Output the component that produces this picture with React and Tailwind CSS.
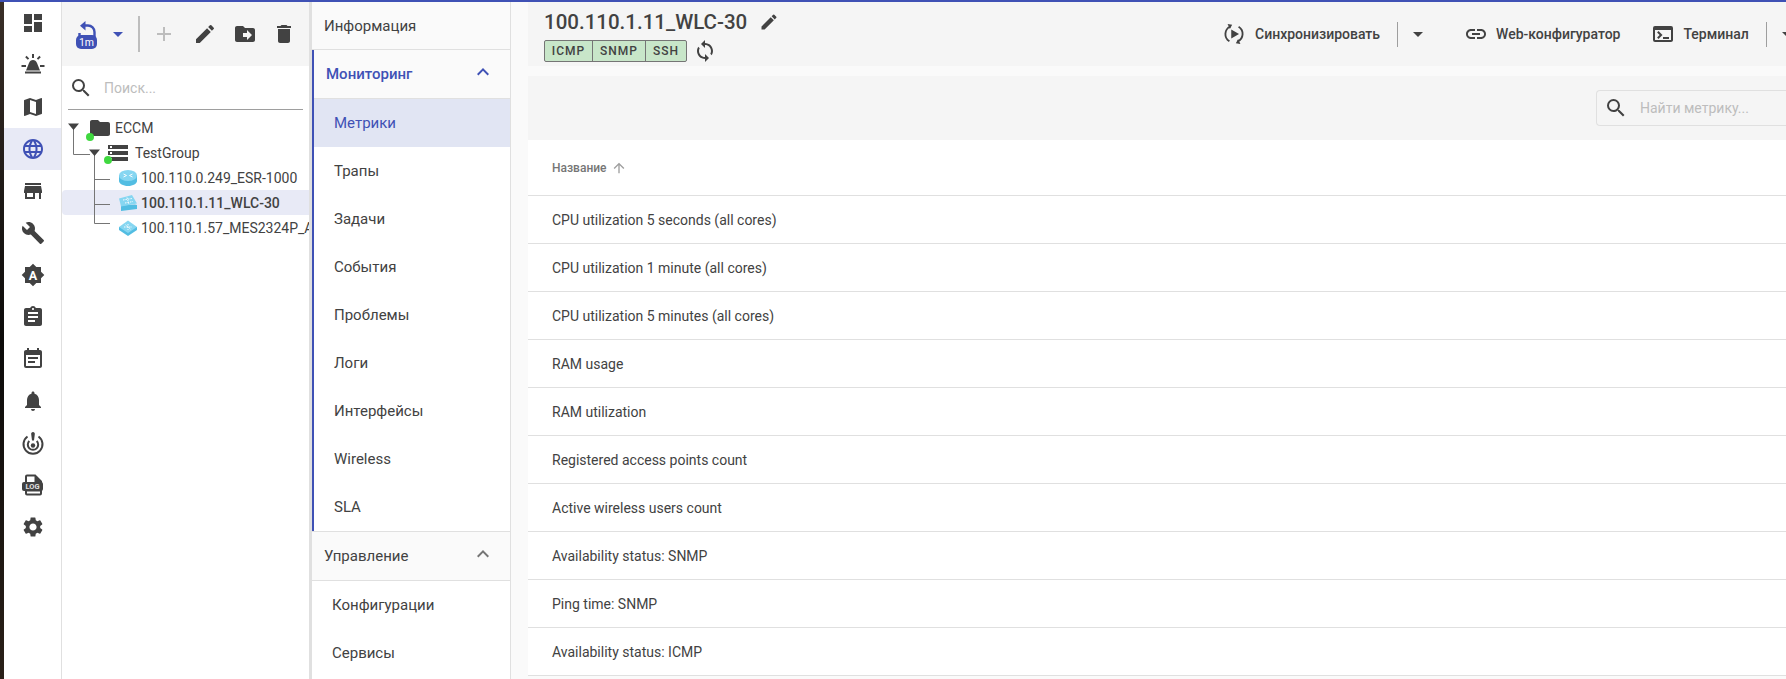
import React from 'react';
import {
  MdDashboard, MdMap, MdLanguage, MdStore, MdBuild, MdAssignment, MdEventNote, MdNotifications,
  MdSettings, MdAdd, MdEdit, MdDriveFileMove, MdDelete, MdSearch, MdSync, MdLink, MdTerminal,
  MdArrowDropDown, MdArrowUpward, MdExpandLess, MdFolder, MdStorage,
} from 'react-icons/md';

const SirenIcon = ({ size = 24 }) => (
  <svg width={size} height={size} viewBox="0 0 24 24" fill="currentColor">
    <path d="M11 1h2v4h-2zM4.200 4.200l1.400-1.400 2.600 2.600-1.400 1.400zM18.400 2.800l1.400 1.400-2.600 2.600-1.400-1.400zM0.500 12h4.500v2H0.500zM19 12h4.500v2H19z" />
    <path d="M12 7c2 0 3.200 1 4 3l3 7.500H5l3-7.500c.8-2 2-3 4-3zM4 18.500h16V20.500H4z" />
  </svg>
);

const BadgeAIcon = ({ size = 24 }) => (
  <svg width={size} height={size} viewBox="0 0 24 24">
    <path fill="currentColor" d="M20 15.310L23.310 12 20 8.690V4h-4.690L12 .69 8.690 4H4v4.690L.69 12 4 15.310V20h4.690L12 23.310 15.310 20H20v-4.690z" />
    <text x="12" y="16.500" textAnchor="middle" fontSize="12.500" fontWeight="700" fontFamily="Roboto, sans-serif" fill="#ffffff">A</text>
  </svg>
);

const PowerTargetIcon = ({ size = 24 }) => (
  <svg width={size} height={size} viewBox="0 0 24 24" fill="none" stroke="currentColor">
    <path strokeWidth="2" d="M6.500 5.500a9.500 9.500 0 1 0 11 0" />
    <path strokeWidth="2" d="M8.300 10a5.200 5.200 0 1 0 7.400 0" />
    <circle cx="12" cy="14.500" r="2.200" fill="currentColor" stroke="none" />
    <path fill="currentColor" stroke="none" d="M12 1c1.300 0 2 1 1.800 2.200L13 9.500h-2l-.8-6.300C10 2 10.700 1 12 1z" />
  </svg>
);

const LogFileIcon = ({ size = 24 }) => (
  <svg width={size} height={size} viewBox="0 0 24 24">
    <path fill="currentColor" d="M6 1.500h8.500L21 8v12.500a2 2 0 0 1-2 2H6a2 2 0 0 1-2-2v-17a2 2 0 0 1 2-2z" />
    <path fill="#ffffff" d="M6 3.500h7.500V9H6zM6 18.500h13v2H6z" />
    <rect x="1" y="9" width="21" height="9" rx="2" fill="currentColor" />
    <text x="11.500" y="16.200" textAnchor="middle" fontSize="7.500" fontWeight="700" fontFamily="Roboto, sans-serif" fill="#e0e0e0">LOG</text>
  </svg>
);

const LockTimerIcon = () => (
  <svg width="24" height="30" viewBox="0 0 24 30">
    <path fill="none" stroke="#3f51b5" strokeWidth="2.400" d="M4.500 16v-3M19.500 17v-5a6.500 6.500 0 0 0-6.500-6.500H9" />
    <path fill="#3f51b5" d="M10.500 1v9.500L5 5.700z" />
    <rect x="1" y="15" width="21" height="14" rx="5" fill="#3f51b5" />
    <text x="11.500" y="26" textAnchor="middle" fontSize="10.500" fontFamily="Roboto, sans-serif" fill="#ffffff">1m</text>
  </svg>
);

const SyncPlayIcon = ({ size = 22 }) => (
  <svg width={size} height={size} viewBox="0 0 24 24" fill="none" stroke="currentColor">
    <path strokeWidth="2" d="M8 3.800A9.200 9.200 0 0 0 7 20" />
    <path strokeWidth="2" d="M16 20.200A9.200 9.200 0 0 0 17 4" />
    <path fill="currentColor" stroke="none" d="M5 1l5 1-2.500 4.500zM19 23l-5-1 2.500-4.500zM9 7l8.500 5-8.500 5z" />
  </svg>
);

const RouterIcon = () => (
  <svg className="shrink-0" width="20" height="18" viewBox="0 0 20 18">
    <path fill="#52bde2" d="M1 6v6c0 2.500 4 5 9 5s9-2.500 9-5V6z" />
    <ellipse cx="10" cy="6.500" rx="9" ry="5.500" fill="#86d6f1" />
    <path stroke="#ffffff" strokeWidth="0.900" fill="none" d="M5.500 5l3 1.500M14.500 5l-3 1.500M5.500 8l3-1.500M14.500 8l-3-1.500" />
  </svg>
);

const WlcIcon = () => (
  <svg className="shrink-0" width="20" height="18" viewBox="0 0 20 18">
    <path fill="#52bde2" d="M3 11.500l14-1 2 .5v4L3 17z" />
    <path fill="#86d6f1" d="M1 4.500L14 1l5 8.500-16 3z" />
    <path stroke="#ffffff" strokeWidth="0.900" strokeDasharray="1.500 1" fill="none" d="M5 6l9-1.500M7 9l8-1.500M9 3.500l2 7" />
  </svg>
);

const SwitchIcon = () => (
  <svg className="shrink-0" width="20" height="18" viewBox="0 0 20 18">
    <path fill="#52bde2" d="M1 8v3l9 6 9-6V8z" />
    <path fill="#86d6f1" d="M10 1.500L19 8l-9 6-9-6z" />
    <path stroke="#ffffff" strokeWidth="0.900" strokeDasharray="1.500 1" fill="none" d="M6 8h8M10 5v6M7.500 5.800l5 4.400" />
  </svg>
);

const navItems = [
  { Icon: MdDashboard },
  { Icon: SirenIcon },
  { Icon: MdMap },
  { Icon: MdLanguage, active: true },
  { Icon: MdStore },
  { Icon: MdBuild },
  { Icon: BadgeAIcon },
  { Icon: MdAssignment },
  { Icon: MdEventNote },
  { Icon: MdNotifications },
  { Icon: PowerTargetIcon },
  { Icon: LogFileIcon },
  { Icon: MdSettings },
];

const monitoringItems = ['Метрики', 'Трапы', 'Задачи', 'События', 'Проблемы', 'Логи', 'Интерфейсы', 'Wireless', 'SLA'];

const metrics = [
  'CPU utilization 5 seconds (all cores)',
  'CPU utilization 1 minute (all cores)',
  'CPU utilization 5 minutes (all cores)',
  'RAM usage',
  'RAM utilization',
  'Registered access points count',
  'Active wireless users count',
  'Availability status: SNMP',
  'Ping time: SNMP',
  'Availability status: ICMP',
];

const Sidebar = () => (
  <nav className="w-[58px] shrink-0 bg-white border-r border-[#e0e0e0] flex flex-col">
    {navItems.map(({ Icon, active }, i) => (
      <div
        key={i}
        className={`h-[42px] shrink-0 flex items-center justify-center ${active ? 'bg-[#e8eaf6] text-[#3f51b5]' : 'text-[#424242]'}`}
      >
        <Icon size={24} />
      </div>
    ))}
  </nav>
);

const TreePanel = () => (
  <aside className="w-[247px] shrink-0 bg-white flex flex-col overflow-hidden">
    <div className="h-16 shrink-0 bg-[#f5f5f5] flex items-center text-[#424242]">
      <div className="ml-[13px] mt-[2px] flex items-center">
        <LockTimerIcon />
      </div>
      <MdArrowDropDown size={24} className="ml-[7px] text-[#3f51b5]" />
      <div className="ml-[8px] w-[2px] h-9 bg-[#bdbdbd]" />
      <MdAdd size={24} className="ml-[12px] text-[#bdbdbd]" />
      <MdEdit size={24} className="ml-[17px]" />
      <MdDriveFileMove size={24} className="ml-[16px]" />
      <MdDelete size={24} className="ml-[15px]" />
    </div>
    <div className="h-[44px] shrink-0 mx-[6px] border-b border-[#9e9e9e] flex items-center pl-[1px]">
      <MdSearch size={24} className="text-[#424242]" />
      <span className="ml-[11px] text-sm text-[#bdbdbd]">Поиск...</span>
    </div>
    <div className="relative pt-[5px] text-sm text-[#424242]">
      <svg className="absolute left-0 top-0" width="120" height="130" fill="none" stroke="#757575" strokeWidth="1">
        <path d="M11.500 19v25.500H28" />
        <path d="M32.500 44v69.500H48M32.500 69.500H48M32.500 94.500H48" />
        <path fill="#424242" stroke="none" d="M6 13.500h11L11.500 20zM27 39.500h11L32.500 46z" />
      </svg>
      <div className="h-[25px] flex items-center pl-[26px] relative">
        <span className="relative flex">
          <MdFolder size={24} />
          <span className="absolute left-[-2px] bottom-[-1px] w-2 h-2 rounded-full bg-[#3fd83f]" />
        </span>
        <span className="ml-[3px]">ECCM</span>
      </div>
      <div className="h-[25px] flex items-center pl-[44px] relative">
        <span className="relative flex">
          <MdStorage size={24} />
          <span className="absolute left-[-2px] bottom-[1px] w-2 h-2 rounded-full bg-[#3fd83f]" />
        </span>
        <span className="ml-[5px]">TestGroup</span>
      </div>
      <div className="h-[25px] flex items-center pl-[56px] whitespace-nowrap">
        <RouterIcon />
        <span className="ml-[3px]">100.110.0.249_ESR-1000</span>
      </div>
      <div className="h-[25px] flex items-center pl-[56px] whitespace-nowrap bg-[#e8eaf6] rounded-l font-medium">
        <WlcIcon />
        <span className="ml-[3px]">100.110.1.11_WLC-30</span>
      </div>
      <div className="h-[25px] flex items-center pl-[56px] whitespace-nowrap">
        <SwitchIcon />
        <span className="ml-[3px]">100.110.1.57_MES2324P_AC</span>
      </div>
    </div>
  </aside>
);

const SectionMenu = () => (
  <div className="w-[202px] shrink-0 bg-white border-l-[3px] border-r border-[#e0e0e0] flex flex-col text-[15px] text-[#424242] overflow-hidden">
    <div className="h-12 shrink-0 bg-[#fafafa] border-b border-[#e0e0e0] flex items-center pl-[12px] pt-[2px]">Информация</div>
    <div className="border-l-2 border-[#3f51b5]">
      <div className="h-[49px] bg-[#fafafa] border-b border-[#e0e0e0] flex items-center justify-between pl-[12px] pr-[15px] font-medium text-[#3f51b5]">
        <span>Мониторинг</span>
        <MdExpandLess size={24} className="mb-[5px]" />
      </div>
      {monitoringItems.map((item, i) => (
        <div key={item} className={`h-12 flex items-center pl-[20px] ${i === 0 ? 'bg-[#e1e5f3] text-[#3f51b5]' : ''}`}>
          {item}
        </div>
      ))}
    </div>
    <div className="h-[50px] shrink-0 bg-[#fafafa] border-y border-[#e0e0e0] flex items-center justify-between pl-[12px] pr-[15px]">
      <span>Управление</span>
      <MdExpandLess size={24} className="mb-[5px] text-[#757575]" />
    </div>
    <div className="h-12 shrink-0 flex items-center pl-[20px]">Конфигурации</div>
    <div className="h-12 shrink-0 flex items-center pl-[20px]">Сервисы</div>
  </div>
);

const Content = () => (
  <main className="flex-1 min-w-0 bg-[#fafafa] pl-[17px] overflow-hidden text-[#424242]">
    <header className="h-16 bg-[#f5f5f5] flex items-start whitespace-nowrap">
      <div className="pl-[16px] pt-[6px] w-[695px] shrink-0">
        <div className="flex items-center h-[28px]">
          <h1 className="text-[20.5px] font-medium">100.110.1.11_WLC-30</h1>
          <MdEdit size={20} className="ml-[12px]" />
        </div>
        <div className="flex items-center mt-[3px]">
          <div className="flex h-[22px] rounded-[2px] border border-[#757575] bg-[#c8e6c9] text-xs font-medium tracking-[1px]">
            <span className="w-[48px] flex items-center justify-center border-r border-[#757575]">ICMP</span>
            <span className="w-[53px] flex items-center justify-center border-r border-[#757575]">SNMP</span>
            <span className="w-[40px] flex items-center justify-center">SSH</span>
          </div>
          <MdSync size={24} className="ml-[6px]" />
        </div>
      </div>
      <div className="flex items-center h-[64px] text-sm font-medium">
        <SyncPlayIcon />
        <span className="ml-[10px]">Синхронизировать</span>
        <span className="ml-[17px] w-px h-[25px] bg-[#9e9e9e]" />
        <MdArrowDropDown size={24} className="ml-[8px]" />
        <MdLink size={24} className="ml-[34px]" />
        <span className="ml-[8px]">Web-конфигуратор</span>
        <MdTerminal size={24} className="ml-[31px]" />
        <span className="ml-[8px]">Терминал</span>
        <span className="ml-[17px] w-px h-[25px] bg-[#9e9e9e]" />
        <MdArrowDropDown size={24} className="ml-[8px]" />
      </div>
    </header>
    <div className="mt-[10px] h-16 bg-[#f5f5f5] flex items-center justify-end">
      <div className="w-[190px] h-9 border border-r-0 border-[#e0e0e0] rounded-l flex items-center pl-[7px]">
        <MdSearch size={24} />
        <span className="ml-[12px] text-sm text-[#bdbdbd]">Найти метрику...</span>
      </div>
    </div>
    <div className="bg-white">
      <div className="h-[56px] border-b border-[#e0e0e0] flex items-center pl-[24px] text-xs font-medium text-[#757575]">
        Название
        <MdArrowUpward size={16} className="ml-[4px] text-[#9e9e9e]" />
      </div>
      {metrics.map((m) => (
        <div key={m} className="h-12 border-b border-[#e0e0e0] flex items-center pl-[24px] text-sm">
          {m}
        </div>
      ))}
    </div>
  </main>
);

export default function App() {
  return (
    <div className="h-screen flex flex-col overflow-hidden font-['Roboto',sans-serif] bg-white">
      <div className="h-[2px] shrink-0 bg-[#3f51b5]" />
      <div className="flex-1 min-h-0 flex">
        <div className="w-1 shrink-0 bg-gradient-to-b from-[#3a2f28] via-[#0c0b0a] to-[#2a2018]" />
        <Sidebar />
        <TreePanel />
        <SectionMenu />
        <Content />
      </div>
    </div>
  );
}
